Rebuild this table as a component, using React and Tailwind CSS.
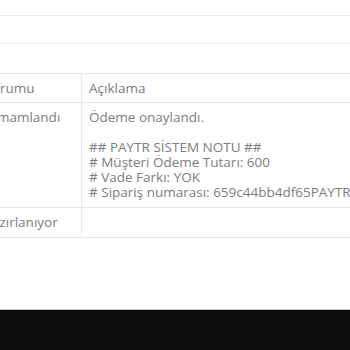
export default function App() {
  const font = { fontFamily: '"Open Sans", "Noto Sans", sans-serif' };
  return (
    <div className="w-[350px] h-[350px] overflow-hidden bg-white flex flex-col text-[13.5px] leading-[15px] text-[#7d7d7d]" style={font}>
      <div className="h-[16px] border-b border-[#ececec]" />
      <div className="h-[28px] border-b border-[#ececec]" />
      <div className="h-[29px]" />

      <div className="-ml-[25px] w-[600px] border-t border-[#e8e8e8]">
        <div className="flex border-b border-[#e8e8e8]">
          <div className="w-[107px] shrink-0 px-[7px] py-[6.5px] border-r border-[#e8e8e8]">Durumu</div>
          <div className="flex-1 px-[7px] py-[6.5px]">Açıklama</div>
        </div>
        <div className="flex border-b border-[#e8e8e8]">
          <div className="w-[107px] shrink-0 px-[7px] py-[7px] border-r border-[#e8e8e8]">Tamamlandı</div>
          <div className="flex-1 px-[7px] py-[7px] whitespace-nowrap">
            <p>Ödeme onaylandı.</p>
            <p>&nbsp;</p>
            <p>## PAYTR SİSTEM NOTU ##</p>
            <p># Müşteri Ödeme Tutarı: 600</p>
            <p># Vade Farkı: YOK</p>
            <p># Sipariş numarası: 659c44bb4df65PAYTROC</p>
          </div>
        </div>
        <div className="flex border-b border-[#e8e8e8]">
          <div className="w-[107px] shrink-0 px-[7px] py-[7px] border-r border-[#e8e8e8]">Hazırlanıyor</div>
          <div className="flex-1 px-[7px] py-[7px]">&nbsp;</div>
        </div>
      </div>

      <div className="flex-1" />
      <div className="h-[1px] bg-[#c8c8c8]" />
      <div className="h-[40px] bg-[#0b0b0b]" />
    </div>
  );
}
